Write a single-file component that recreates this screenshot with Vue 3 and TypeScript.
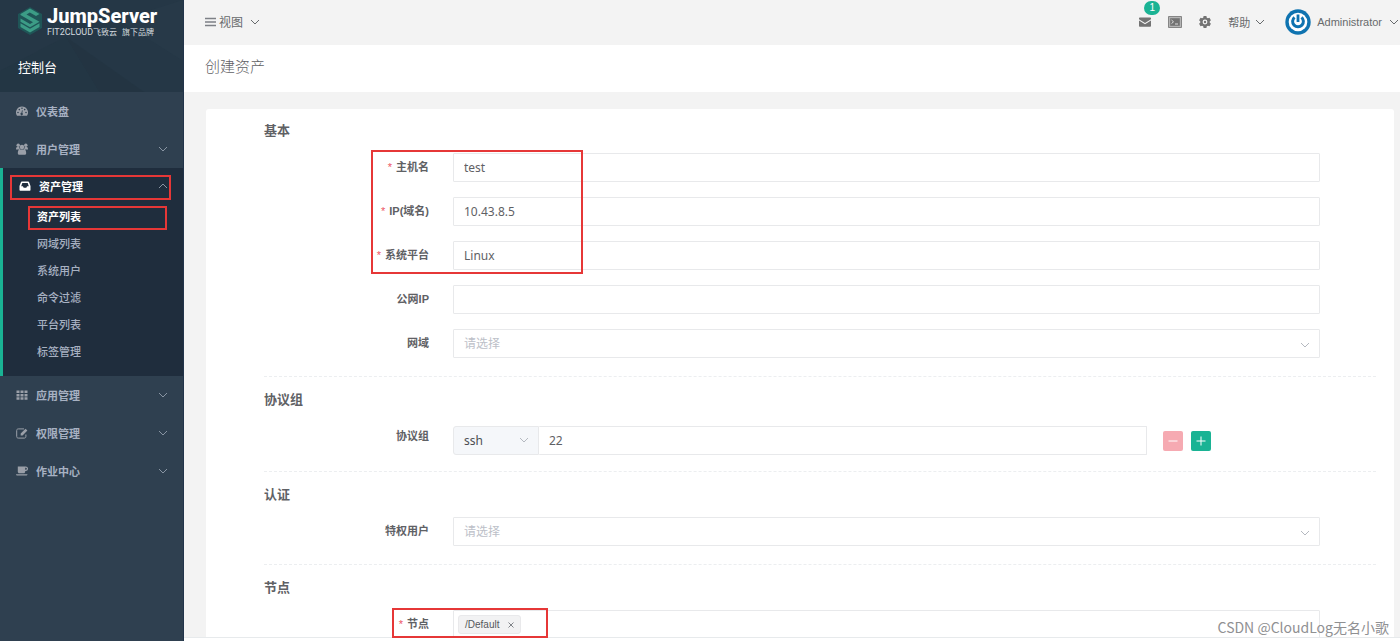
<script setup lang="ts">
import { ref } from 'vue'

interface NavItem {
  label: string
  icon: string
  expandable?: boolean
  children?: string[]
}

const navItems: NavItem[] = [
  { label: '仪表盘', icon: 'dashboard' },
  { label: '用户管理', icon: 'users', expandable: true },
  {
    label: '资产管理',
    icon: 'inbox',
    expandable: true,
    children: ['资产列表', '网域列表', '系统用户', '命令过滤', '平台列表', '标签管理'],
  },
  { label: '应用管理', icon: 'grid', expandable: true },
  { label: '权限管理', icon: 'edit', expandable: true },
  { label: '作业中心', icon: 'coffee', expandable: true },
]

const hostname = ref('test')
const address = ref('10.43.8.5')
const platform = ref('Linux')
const publicIp = ref('')
const domain = ref('')
const protocol = ref('ssh')
const port = ref('22')
const adminUser = ref('')
const nodes = ref(['/Default'])
const nodeQuery = ref('')

function removeNode(name: string) {
  nodes.value = nodes.value.filter((n) => n !== name)
}
</script>

<template>
  <div class="layout">
    <aside class="sidebar">
      <div class="brand">
        <svg class="brand-pattern" viewBox="0 0 184 91" preserveAspectRatio="none" aria-hidden="true">
          <path d="M66 36 100 91H0V70z" fill="#21323f" opacity=".25" />
          <path d="M66 36 145 91H100z" fill="#1f303d" opacity=".35" />
          <path d="M184 0v60L120 20z" fill="#2a3f4d" opacity=".35" />
        </svg>
        <a class="logo" href="#">
          <svg class="logo-mark" viewBox="0 0 26 30" aria-hidden="true">
            <path d="M13 1 25 8v14L13 29 1 22V8z" fill="#1f5557" />
            <path d="M13 2.500 22.500 8 19 10 12.800 6.500 9.500 8.400 22.500 15.800 13 21.300 3.500 15.800V12.600L13 18 16 16.200 3.500 9V8z" fill="#3c9c86" />
            <path d="M3.500 17.300 13 22.800l9.500-5.500v3.700L13 26.500 3.500 21z" fill="#3c9c86" />
          </svg>
          <span class="logo-text">
            <span class="logo-name">JumpServer</span>
            <span class="logo-sub">FIT2CLOUD<span class="logo-cn">飞致云</span><span class="logo-cn brand-note">旗下品牌</span></span>
          </span>
        </a>
        <div class="console">控制台</div>
      </div>

      <nav>
        <ul class="menu">
          <li v-for="item in navItems" :key="item.label" :class="{ open: item.children }">
            <a class="menu-link" href="#">
              <svg v-if="item.icon === 'dashboard'" class="menu-icon" viewBox="0 0 12 12">
                <path fill-rule="evenodd" d="M6 1.500a6 6 0 0 0-5 9.300h10A6 6 0 0 0 6 1.500zM2 8.300a.8.8 0 1 1 0-1.600.8.8 0 0 1 0 1.600zM3.300 5.400a.8.8 0 1 1 0-1.600.8.8 0 0 1 0 1.600zM6 4a.8.8 0 1 1 0-1.600A.8.8 0 0 1 6 4zm.8 5.600a1.200 1.200 0 1 1-1.300-1.800L6 5.300l.7.200-.4 2.500a1.200 1.200 0 0 1 .5 1.600zM8.700 5.400a.8.8 0 1 1 0-1.600.8.8 0 0 1 0 1.600zM10 8.300a.8.8 0 1 1 0-1.600.8.8 0 0 1 0 1.600z" />
              </svg>
              <svg v-else-if="item.icon === 'users'" class="menu-icon" viewBox="0 0 12 12">
                <circle cx="2.200" cy="2.300" r="1.700" />
                <circle cx="9.800" cy="2.300" r="1.700" />
                <circle cx="6" cy="4" r="2.300" />
                <path d="M0 6.500c0-1.700.5-2.400 1.200-2.400h2c0 1 .4 1.800 1 2.500H.8zM12 6.500c0-1.700-.5-2.400-1.200-2.400h-2c0 1-.4 1.800-1 2.500h3.400zM1.800 10.200c0-2.300.7-3.700 1.900-3.700h4.600c1.200 0 1.900 1.400 1.900 3.700 0 .8-.6 1.500-1.400 1.500H3.200c-.8 0-1.400-.7-1.400-1.500z" />
              </svg>
              <svg v-else-if="item.icon === 'inbox'" class="menu-icon" viewBox="0 0 12 12">
                <path fill-rule="evenodd" d="M2.800 1.500h6.400c.4 0 .7.300.9.700L11.500 6v4c0 .4-.3.700-.7.700H1.200a.7.700 0 0 1-.7-.7V6l1.400-3.800c.2-.4.500-.7.900-.7zM3.300 3 2.200 6.200h1.700l.8 1.500h2.600l.8-1.500h1.700L8.700 3z" />
              </svg>
              <svg v-else-if="item.icon === 'grid'" class="menu-icon" viewBox="0 0 12 12">
                <path d="M.5 1.500h3v2.500h-3zM4.500 1.500h3v2.500h-3zM8.500 1.500h3v2.500h-3zM.5 4.900h3v2.500h-3zM4.500 4.900h3v2.500h-3zM8.500 4.900h3v2.500h-3zM.5 8.300h3v2.500h-3zM4.500 8.300h3v2.500h-3zM8.500 8.300h3v2.500h-3z" />
              </svg>
              <svg v-else-if="item.icon === 'edit'" class="menu-icon" viewBox="0 0 12 12">
                <path d="M8 1.900H2.300C1.300 1.900.7 2.500.7 3.500v6c0 1 .6 1.600 1.600 1.600h6c1 0 1.600-.6 1.600-1.600V7.500" fill="none" stroke="currentColor" />
                <path d="M4.700 8.400V6.500l4.800-4.800 1.900 1.900-4.800 4.800z" />
              </svg>
              <svg v-else class="menu-icon" viewBox="0 0 12 12">
                <path fill-rule="evenodd" d="M1.800 1.500h8a2.200 2.200 0 0 1 0 4.500h-.6v.8c0 .9-.7 1.500-1.500 1.500H3.300c-.8 0-1.500-.6-1.500-1.500zM9.200 2.700v2.100h.6a1 1 0 0 0 0-2.100zM0 9.200h11.500c0 .8-.7 1.400-1.500 1.400H1.500C.7 10.600 0 10 0 9.200z" />
              </svg>
              <span class="menu-text">{{ item.label }}</span>
              <svg v-if="item.expandable" class="chevron" :class="{ up: item.children }" viewBox="0 0 10 6">
                <path d="M1 1l4 4 4-4" />
              </svg>
              <span v-if="item.children" class="mark mark-group"></span>
            </a>
            <ul v-if="item.children" class="submenu">
              <li v-for="(child, i) in item.children" :key="child">
                <a class="submenu-link" :class="{ current: i === 0 }" href="#">
                  {{ child }}
                  <span v-if="i === 0" class="mark mark-child"></span>
                </a>
              </li>
            </ul>
          </li>
        </ul>
      </nav>
    </aside>

    <main class="main">
      <header class="topbar">
        <button class="top-btn view-btn" type="button">
          <svg class="bars" viewBox="0 0 11 10"><path d="M0 1.500h11M0 5h11M0 8.500h11" /></svg>
          <span>视图</span>
          <svg class="chevron" viewBox="0 0 10 6"><path d="M1 1l4 4 4-4" /></svg>
        </button>
        <div class="top-right">
          <button class="top-btn mail" type="button" aria-label="消息">
            <svg class="top-icon" viewBox="0 0 14 14">
              <path d="M1 4.200V3.500c0-.6.4-1 1-1h10c.6 0 1 .4 1 1v.7L7 8zM1 5.500l6 3.800 6-3.800v5.300c0 .6-.4 1-1 1H2c-.6 0-1-.4-1-1z" />
            </svg>
            <span class="badge">1</span>
          </button>
          <button class="top-btn" type="button" aria-label="终端">
            <svg class="top-icon" viewBox="0 0 14 14">
              <path d="M.5 1.500h13v11H.5z" fill="#b5b5b5" stroke="#858585" />
              <path d="M2.200 3.200h9.600v7.600H2.200z" />
              <path d="M3.500 5l2 1.800-2 1.800M7 9h3" fill="none" stroke="#ddd" />
            </svg>
          </button>
          <button class="top-btn" type="button" aria-label="设置">
            <svg class="top-icon" viewBox="0 0 14 14">
              <path fill-rule="evenodd" d="M5.600 1h2.800l.4 1.700 1.100.6 1.600-.5 1.400 2.400L11.700 6.400v1.200l1.200 1.200-1.400 2.400-1.600-.5-1.100.6L8.400 13H5.600l-.4-1.700-1.100-.6-1.600.5L1.100 8.800l1.200-1.200V6.400L1.100 5.200l1.400-2.400 1.600.5 1.100-.6zM7 4.600a2.400 2.400 0 1 0 0 4.800 2.400 2.400 0 0 0 0-4.800z" />
              <circle cx="7" cy="7" r="1.200" />
            </svg>
          </button>
          <button class="top-btn help" type="button">
            <span>帮助</span>
            <svg class="chevron" viewBox="0 0 10 6"><path d="M1 1l4 4 4-4" /></svg>
          </button>
          <button class="top-btn user" type="button">
            <svg class="avatar" viewBox="0 0 26 26">
              <circle cx="13" cy="13" r="12.700" fill="#0f73b0" />
              <circle cx="13" cy="13" r="9.300" fill="#fff" />
              <path d="M9.500 8.300a5.400 5.400 0 1 0 7 0" fill="none" stroke="#0f73b0" stroke-width="3" />
              <path d="M13 5.500v7.500" stroke="#0f73b0" stroke-width="2.800" />
            </svg>
            <span>Administrator</span>
            <svg class="chevron" viewBox="0 0 10 6"><path d="M1 1l4 4 4-4" /></svg>
          </button>
        </div>
      </header>

      <div class="title-bar"><h1>创建资产</h1></div>

      <form class="card" @submit.prevent>
        <section class="section">
          <h2>基本</h2>
          <div class="rows">
            <div class="row">
              <label class="required" for="hostname">主机名</label>
              <input id="hostname" v-model="hostname" class="control" type="text" />
            </div>
            <div class="row">
              <label class="required" for="address">IP(域名)</label>
              <input id="address" v-model="address" class="control" type="text" />
            </div>
            <div class="row">
              <label class="required" for="platform">系统平台</label>
              <input id="platform" v-model="platform" class="control" type="text" />
            </div>
            <div class="row">
              <label for="public-ip">公网IP</label>
              <input id="public-ip" v-model="publicIp" class="control" type="text" />
            </div>
            <div class="row">
              <label for="domain">网域</label>
              <div class="select-box">
                <select id="domain" v-model="domain" class="control placeholder">
                  <option value="">请选择</option>
                </select>
                <svg class="chevron" viewBox="0 0 10 6"><path d="M1 1l4 4 4-4" /></svg>
              </div>
            </div>
            <span class="mark mark-basic"></span>
          </div>
        </section>

        <section class="section compact">
          <h2>协议组</h2>
          <div class="row">
            <label for="port">协议组</label>
            <div class="protocol">
              <div class="protocol-group">
                <div class="select-box prepend">
                  <select v-model="protocol" class="control" aria-label="协议">
                    <option>ssh</option>
                  </select>
                  <svg class="chevron" viewBox="0 0 10 6"><path d="M1 1l4 4 4-4" /></svg>
                </div>
                <input id="port" v-model="port" class="control port" type="text" />
              </div>
              <button class="square remove" type="button" aria-label="删除">
                <svg viewBox="0 0 10 10"><path d="M.5 5h9" /></svg>
              </button>
              <button class="square add" type="button" aria-label="添加">
                <svg viewBox="0 0 10 10"><path d="M.5 5h9M5 .5v9" /></svg>
              </button>
            </div>
          </div>
        </section>

        <section class="section">
          <h2>认证</h2>
          <div class="row">
            <label for="admin-user">特权用户</label>
            <div class="select-box">
              <select id="admin-user" v-model="adminUser" class="control placeholder">
                <option value="">请选择</option>
              </select>
              <svg class="chevron" viewBox="0 0 10 6"><path d="M1 1l4 4 4-4" /></svg>
            </div>
          </div>
        </section>

        <section class="section">
          <h2>节点</h2>
          <div class="row">
            <label class="required" for="node">节点</label>
            <div class="control tags">
              <span v-for="node in nodes" :key="node" class="tag">
                {{ node }}
                <button type="button" aria-label="移除" @click="removeNode(node)">
                  <svg viewBox="0 0 6 6"><path d="M.5.5l5 5M5.500.5l-5 5" /></svg>
                </button>
              </span>
              <input id="node" v-model="nodeQuery" type="text" />
            </div>
            <span class="mark mark-node"></span>
          </div>
        </section>
      </form>

      <footer class="footer"></footer>
      <div class="watermark">CSDN @CloudLog无名小歌</div>
    </main>
  </div>
</template>

<style>
html,
body {
  margin: 0;
  background: #f3f3f3;
}
</style>

<style scoped>
.layout {
  display: flex;
  height: 100vh;
  overflow: hidden;
  font-family: 'Liberation Sans', 'Noto Sans CJK SC', sans-serif;
  font-size: 11px;
  color: #5f6165;
}
.layout *,
.layout *::before {
  box-sizing: border-box;
}
button,
input,
select {
  font: inherit;
  color: inherit;
  margin: 0;
}
a {
  color: inherit;
  text-decoration: none;
}
ul {
  list-style: none;
  margin: 0;
  padding: 0;
}
.chevron {
  width: 10px;
  height: 6px;
  flex: none;
  fill: none;
  stroke: currentColor;
  stroke-width: 1;
}
.chevron.up {
  transform: rotate(180deg);
}
.mark {
  position: absolute;
  border: 2px solid #e63737;
  pointer-events: none;
  z-index: 3;
}

/* Sidebar */
.sidebar {
  width: 184px;
  flex: none;
  background: #2f4050;
  border-right: 1px solid #22344a;
  color: #a7b1c2;
}
.brand {
  position: relative;
  height: 92px;
  background: #253746;
}
.brand-pattern {
  position: absolute;
  inset: 0;
  width: 100%;
  height: 100%;
}
.logo {
  position: relative;
  display: flex;
  gap: 4px;
  padding: 6px 0 0 17px;
}
.logo-mark {
  width: 26px;
  height: 30px;
}
.logo-text {
  display: flex;
  flex-direction: column;
  color: #fff;
  font-family: Roboto, 'Noto Sans CJK SC', sans-serif;
  white-space: nowrap;
}
.logo-name {
  font-size: 20px;
  font-weight: 800;
  line-height: 21px;
}
.logo-sub {
  font-size: 9px;
  line-height: 11px;
  color: #d3d9de;
}
.logo-cn {
  font-size: 8px;
}
.brand-note {
  margin-left: 5px;
}
.console {
  position: relative;
  padding: 20px 18px 0;
  font-size: 13px;
  line-height: 20px;
  color: #fff;
}
.menu-link {
  position: relative;
  display: flex;
  align-items: center;
  height: 38px;
  padding: 0 15px 0 16px;
  font-weight: 600;
}
.menu-icon {
  width: 12px;
  height: 12px;
  flex: none;
  fill: currentColor;
  color: #9a9fa8;
}
.menu-text {
  flex: 1;
  margin-left: 8px;
}
.menu-link .chevron {
  color: #8995a3;
}
.open {
  padding-bottom: 10px;
  background: #1f2d3d;
  border-left: 3px solid #1ab394;
}
.open .menu-link {
  height: 36px;
  color: #fff;
}
.open .menu-icon {
  color: #fff;
}
.submenu-link {
  position: relative;
  display: block;
  padding-left: 34px;
  line-height: 27px;
  font-weight: 500;
}
.submenu-link.current {
  color: #fff;
  font-weight: 700;
}
.mark-group {
  inset: 7px 12px 4px 7px;
}
.mark-child {
  inset: 2px 16px 1px 25px;
}

/* Top area */
.main {
  position: relative;
  flex: 1;
  min-width: 0;
}
.topbar {
  display: flex;
  justify-content: space-between;
  height: 45px;
  padding: 0 1px 2px 21px;
}
.top-btn {
  display: flex;
  align-items: center;
  padding: 0;
  border: 0;
  background: none;
  color: #676a6c;
}
.view-btn {
  font-size: 12px;
}
.view-btn .chevron {
  margin-left: 7px;
}
.bars {
  width: 11px;
  height: 10px;
  margin-right: 3px;
  stroke: #7d8086;
  stroke-width: 1.5;
}
.top-right {
  display: flex;
  gap: 16px;
}
.top-icon {
  width: 14px;
  height: 14px;
  fill: #737373;
}
.mail {
  position: relative;
}
.badge {
  position: absolute;
  top: 1px;
  left: 6px;
  width: 16px;
  border-radius: 7px;
  background: #1ab394;
  color: #fff;
  font-size: 10px;
  line-height: 14px;
  text-align: center;
}
.help .chevron {
  margin-left: 5px;
}
.user .chevron {
  margin-left: 7px;
}
.avatar {
  width: 26px;
  height: 26px;
  margin: 0 6px 0 4px;
}
.title-bar {
  display: flex;
  align-items: center;
  height: 47px;
  padding: 0 21px 4px;
  background: #fff;
}
h1 {
  margin: 0;
  font-size: 15px;
  font-weight: 300;
  line-height: 22px;
}

/* Form */
.card {
  min-height: 100vh;
  margin: 17px 6px 0 22px;
  padding: 12px 18px 0 58px;
  border-radius: 3px;
  background: #fff;
}
.section {
  padding-bottom: 18px;
}
.section + .section {
  padding-top: 13px;
  border-top: 1px dashed #eceef0;
}
.section.compact {
  padding-bottom: 16px;
}
h2 {
  margin: 0 0 12px;
  font-size: 13px;
  font-weight: 600;
  line-height: 20px;
}
.rows {
  position: relative;
  display: flex;
  flex-direction: column;
  gap: 15px;
}
.row {
  position: relative;
  display: flex;
  padding-right: 56px;
}
label {
  width: 189px;
  flex: none;
  padding-right: 24px;
  font-weight: 600;
  line-height: 29px;
  text-align: right;
}
.required::before {
  content: '*';
  margin-right: 4px;
  color: #ed5565;
  font-weight: 400;
}
.control {
  flex: 1;
  width: 100%;
  min-width: 0;
  height: 29px;
  padding: 0 10px;
  border: 1px solid #e8e9eb;
  border-radius: 1px;
  background: #fff;
  outline: none;
  font-family: 'Noto Sans', 'Noto Sans CJK SC', sans-serif;
  font-size: 12px;
}
select.control {
  appearance: none;
}
.placeholder {
  color: #bcc0c8;
}
.select-box {
  position: relative;
  flex: 1;
}
.select-box .chevron {
  position: absolute;
  right: 10px;
  top: 13px;
  color: #b5b9c0;
}
.protocol {
  display: flex;
  flex: 1;
  align-items: center;
  padding-top: 4px;
}
.protocol-group {
  display: flex;
  width: 80%;
  margin-right: 16px;
}
.prepend {
  flex: none;
  width: 86px;
}
.prepend .control {
  border-radius: 3px 0 0 3px;
  background: #f5f7fa;
  color: #4c4e52;
}
.prepend .chevron {
  top: 11px;
}
.port {
  border-left: 0;
}
.square {
  display: grid;
  place-items: center;
  width: 20px;
  height: 20px;
  padding: 0;
  border: 0;
  border-radius: 2px;
}
.square svg {
  width: 10px;
  height: 10px;
  stroke: #fff;
  stroke-width: 1;
}
.remove {
  margin-right: 8px;
  background: #f6aab2;
}
.add {
  background: #1ab394;
}
.tags {
  display: flex;
  align-items: center;
  padding: 0 4px;
}
.tag {
  display: flex;
  align-items: center;
  gap: 9px;
  height: 19px;
  padding: 0 6px;
  border: 1px solid #e9e9eb;
  border-radius: 3px;
  background: #f2f2f3;
  font-family: 'Liberation Sans', sans-serif;
  font-size: 10px;
  color: #55585c;
}
.tag button {
  display: flex;
  padding: 0;
  border: 0;
  background: none;
}
.tag svg {
  width: 6px;
  height: 6px;
  stroke: #808388;
}
.tags input {
  flex: 1;
  min-width: 0;
  border: 0;
  outline: none;
  background: none;
}
.mark-basic {
  top: -3px;
  left: 107px;
  width: 212px;
  height: 124px;
}
.mark-node {
  top: -2px;
  left: 128px;
  width: 156px;
  height: 30px;
}
.footer {
  position: absolute;
  inset: auto 0 0;
  height: 4px;
  border-top: 1px solid #e7eaec;
  background: #fff;
}
.watermark {
  position: absolute;
  right: 11px;
  bottom: 4px;
  z-index: 4;
  font-family: 'Noto Sans CJK SC', sans-serif;
  font-size: 14px;
  line-height: 20px;
  color: #8f9092;
}
</style>
